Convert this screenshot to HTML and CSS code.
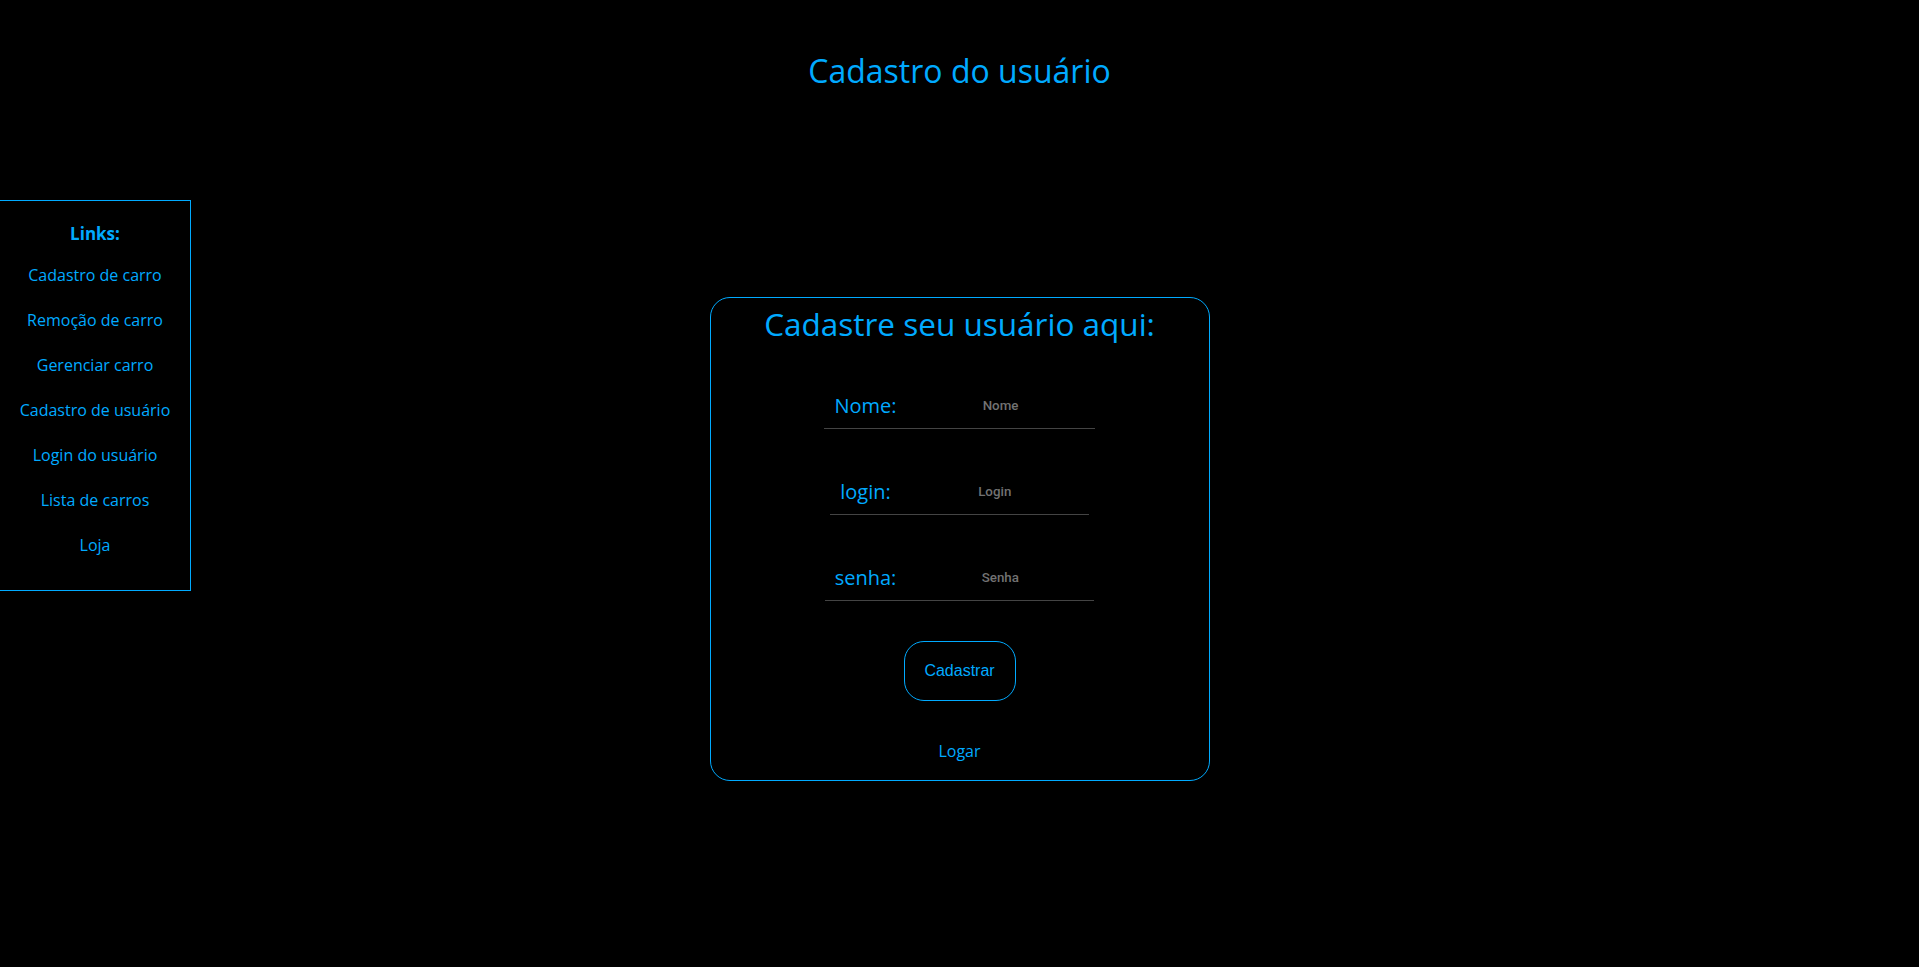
FILE: index.html
```html
<!DOCTYPE html>
<html lang="pt-BR">
<head>
<meta charset="utf-8">
<title>Cadastro do usuário</title>
<link rel="stylesheet" href="styles.css">
</head>
<body>
  <h1 class="page-title">Cadastro do usuário</h1>
  <div class="layout">
    <aside class="sidebar">
      <h3 class="sidebar-title">Links:</h3>
      <ul class="nav">
        <li><a href="#">Cadastro de carro</a></li>
        <li><a href="#">Remoção de carro</a></li>
        <li><a href="#">Gerenciar carro</a></li>
        <li><a href="#">Cadastro de usuário</a></li>
        <li><a href="#">Login do usuário</a></li>
        <li><a href="#">Lista de carros</a></li>
        <li><a href="#">Loja</a></li>
      </ul>
    </aside>
    <section class="card">
      <h2 class="card-title">Cadastre seu usuário aqui:</h2>
      <form class="form">
        <div class="field">
          <label class="field-label" for="nome">Nome:</label>
          <input class="field-input" id="nome" type="text" placeholder="Nome">
        </div>
        <div class="field">
          <label class="field-label" for="login">login:</label>
          <input class="field-input" id="login" type="text" placeholder="Login">
        </div>
        <div class="field">
          <label class="field-label" for="senha">senha:</label>
          <input class="field-input" id="senha" type="password" placeholder="Senha">
        </div>
        <button class="submit" type="button">Cadastrar</button>
      </form>
      <a class="alt-link" href="#">Logar</a>
    </section>
  </div>
</body>
</html>
```

FILE: styles.css
```css
html, body {
  margin: 0;
  padding: 0;
  background: #000;
}

body {
  font-family: "Open Sans", "Liberation Sans", sans-serif;
  color: #00aaff;
  min-height: 967px;
}

a {
  color: #00aaff;
  text-decoration: none;
}

.page-title {
  margin: 0;
  padding-top: 51px;
  font-size: 32px;
  line-height: 40px;
  font-weight: 400;
  text-align: center;
}

.layout {
  display: grid;
  grid-template-columns: 1fr 500px 1fr;
  align-items: start;
}

.sidebar {
  grid-column: 1;
  justify-self: start;
  box-sizing: border-box;
  width: 192px;
  margin-left: -1px;
  margin-top: 109px;
  padding: 21px 0 21px;
  border: 1px solid #00aaff;
  text-align: center;
}

.sidebar-title {
  margin: 0;
  font-size: 17px;
  line-height: 24px;
  font-weight: 700;
}

.nav {
  list-style: none;
  margin: 7px 0 0;
  padding: 0 0 1px;
}

.nav li {
  font-size: 16px;
  line-height: 45px;
  height: 45px;
}

.card {
  grid-column: 2;
  box-sizing: border-box;
  margin-top: 206px;
  height: 484px;
  padding: 6px 0 18px;
  border: 1px solid #00aaff;
  border-radius: 20px;
  display: flex;
  flex-direction: column;
  align-items: center;
}

.card-title {
  margin: 0;
  font-size: 31.5px;
  line-height: 40px;
  font-weight: 400;
}

.form {
  margin-top: 49px;
  display: flex;
  flex-direction: column;
  align-items: center;
  gap: 50px;
}

.field {
  display: flex;
  align-items: center;
  padding: 1px 10px 10px;
  border-bottom: 1px solid #444;
}

.field-label {
  font-size: 20px;
  line-height: 24px;
  margin-right: 20px;
}

.field-input {
  width: 168px;
  height: 20px;
  padding: 0;
  margin: 0;
  border: none;
  outline: none;
  background: transparent;
  text-align: center;
  font-family: Roboto, "Liberation Sans", sans-serif;
  font-size: 13.33px;
  font-weight: 500;
  color: #ccc;
  position: relative;
  top: -1px;
}

.field-input::placeholder {
  color: #727272;
}

.submit {
  margin-top: -10px;
  box-sizing: border-box;
  width: 112px;
  height: 60px;
  padding: 0;
  border: 1px solid #00aaff;
  border-radius: 20px;
  background: transparent;
  color: #00aaff;
  font-family: "Liberation Sans", Arial, sans-serif;
  font-size: 16px;
  cursor: pointer;
}

.alt-link {
  margin-top: 40px;
  font-size: 16px;
  line-height: 20px;
}
```
